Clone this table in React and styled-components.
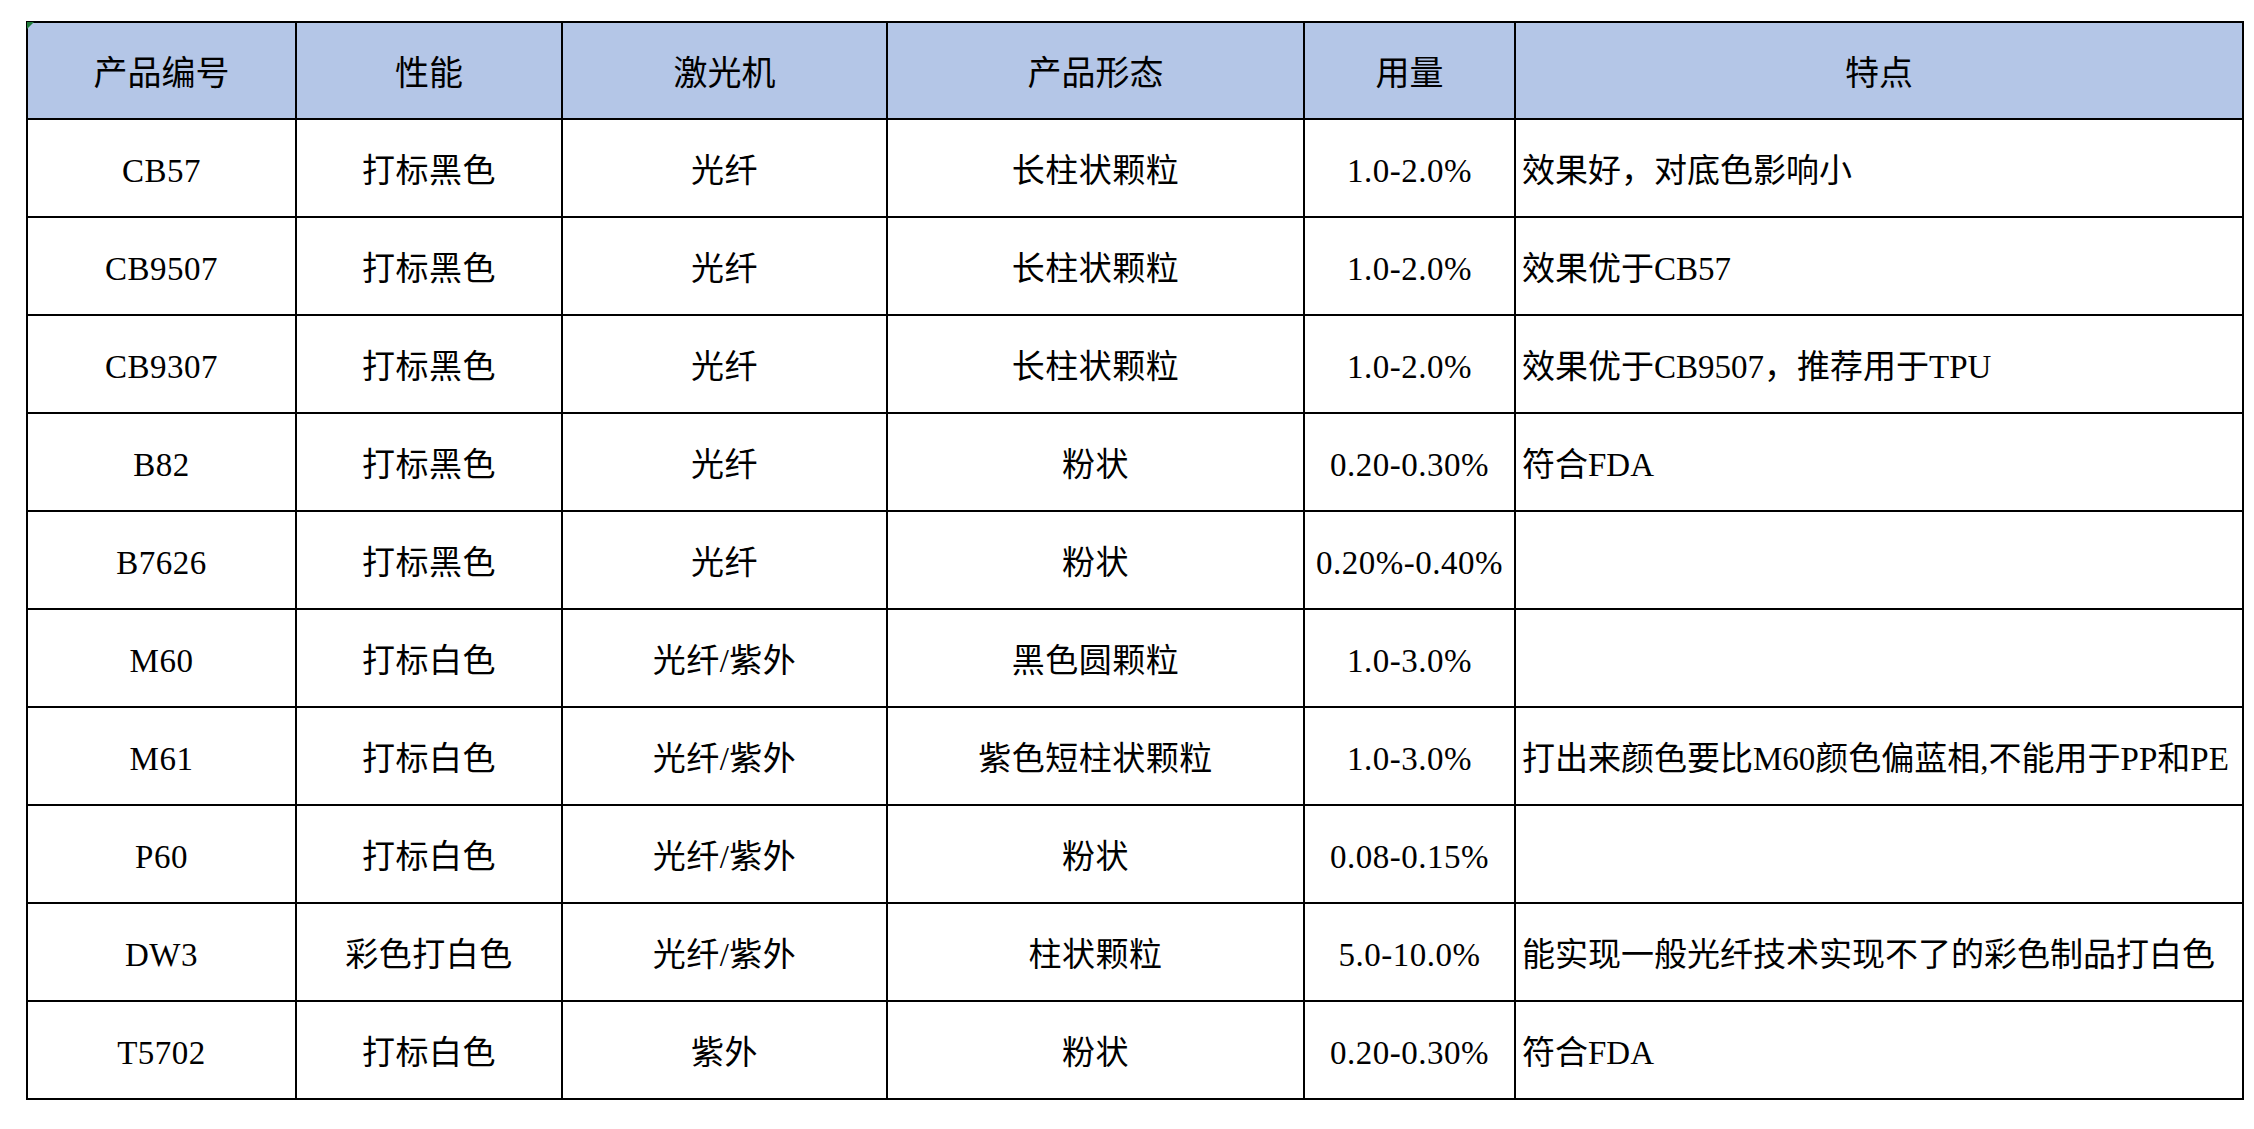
import React from 'react';
import styled, { createGlobalStyle } from 'styled-components';

const columns = [
  { key: 'code', title: '产品编号', width: 269 },
  { key: 'perf', title: '性能', width: 266 },
  { key: 'laser', title: '激光机', width: 325 },
  { key: 'form', title: '产品形态', width: 417 },
  { key: 'dose', title: '用量', width: 211 },
  { key: 'note', title: '特点', width: 728, left: true },
];

const rows = [
  ['CB57', '打标黑色', '光纤', '长柱状颗粒', '1.0-2.0%', '效果好，对底色影响小'],
  ['CB9507', '打标黑色', '光纤', '长柱状颗粒', '1.0-2.0%', '效果优于CB57'],
  ['CB9307', '打标黑色', '光纤', '长柱状颗粒', '1.0-2.0%', '效果优于CB9507，推荐用于TPU'],
  ['B82', '打标黑色', '光纤', '粉状', '0.20-0.30%', '符合FDA'],
  ['B7626', '打标黑色', '光纤', '粉状', '0.20%-0.40%', ''],
  ['M60', '打标白色', '光纤/紫外', '黑色圆颗粒', '1.0-3.0%', ''],
  ['M61', '打标白色', '光纤/紫外', '紫色短柱状颗粒', '1.0-3.0%', '打出来颜色要比M60颜色偏蓝相,不能用于PP和PE'],
  ['P60', '打标白色', '光纤/紫外', '粉状', '0.08-0.15%', ''],
  ['DW3', '彩色打白色', '光纤/紫外', '柱状颗粒', '5.0-10.0%', '能实现一般光纤技术实现不了的彩色制品打白色'],
  ['T5702', '打标白色', '紫外', '粉状', '0.20-0.30%', '符合FDA'],
];

const App = () => {
  return (
    <>
      <GlobalStyle />
      <Page>
        <Sheet>
          <Corner />
          <Table>
            <colgroup>
              {columns.map((c) => (
                <col key={c.key} style={{ width: c.width }} />
              ))}
            </colgroup>
            <thead>
              <tr>
                {columns.map((c) => (
                  <HeadCell key={c.key}>{c.title}</HeadCell>
                ))}
              </tr>
            </thead>
            <tbody>
              {rows.map((row) => (
                <Row key={row[0]}>
                  {row.map((value, i) => (
                    <Cell key={columns[i].key} $left={columns[i].left}>
                      {value}
                    </Cell>
                  ))}
                </Row>
              ))}
            </tbody>
          </Table>
        </Sheet>
      </Page>
    </>
  );
};

const GlobalStyle = createGlobalStyle`
  html, body {
    margin: 0;
    background: #fff;
  }
  body {
    font-family: "Liberation Serif", "Noto Sans CJK SC", serif;
    color: #000;
  }
`;

const Page = styled.div`
  padding: 21px 0 0 26px;
`;

const Sheet = styled.div`
  position: relative;
  display: inline-block;
`;

const Corner = styled.div`
  position: absolute;
  top: 1px;
  left: 1px;
  width: 0;
  height: 0;
  border-top: 7px solid #1f7a3a;
  border-right: 7px solid transparent;
  z-index: 1;
`;

const Table = styled.table`
  border-collapse: collapse;
  table-layout: fixed;
  width: 2218px;
  border: 2px solid #000;
`;

const HeadCell = styled.th`
  height: 89px;
  padding: 6px 0 0;
  background: #b4c6e7;
  border: 2px solid #000;
  font-size: 34px;
  font-weight: 400;
  line-height: 1;
  text-align: center;
  vertical-align: middle;
`;

const Row = styled.tr`
  height: 98px;
`;

const Cell = styled.td`
  padding: 6px ${({ $left }) => ($left ? '6px' : '0')} 0;
  border: 2px solid #000;
  font-size: 33px;
  letter-spacing: ${({ $left }) => ($left ? '0' : '0.5px')};
  line-height: 1;
  white-space: nowrap;
  overflow: hidden;
  text-align: ${({ $left }) => ($left ? 'left' : 'center')};
  vertical-align: middle;
`;

export default App;
